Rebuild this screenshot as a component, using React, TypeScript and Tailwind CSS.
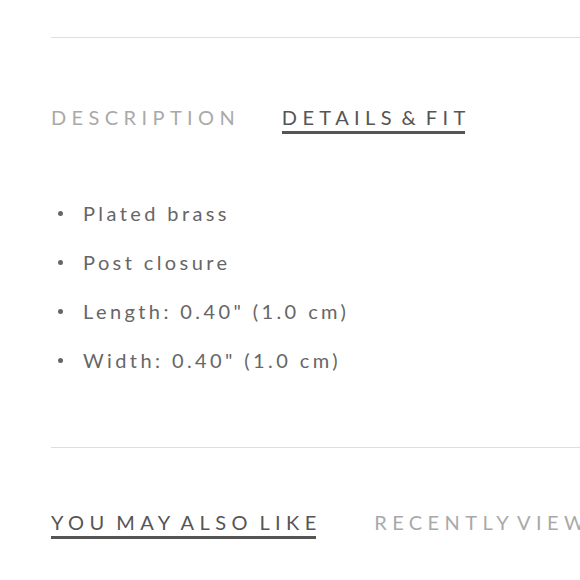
import React from 'react';

const details = ['Plated brass', 'Post closure', 'Length: 0.40" (1.0 cm)', 'Width: 0.40" (1.0 cm)'];

const Tab = ({ label, active, className = '' }: { label: string; active?: boolean; className?: string }) => (
  <button
    className={
      'shrink-0 whitespace-nowrap pb-[2px] text-[20px] leading-[24px] tracking-[0.27em] uppercase ' +
      (active ? 'border-b-[3px] border-[#555555] text-[#555555]' : 'border-b-[3px] border-transparent text-[#a9a9a9]') +
      ' ' +
      className
    }
  >
    <span className="-mr-[0.27em]">{label}</span>
  </button>
);

export default function App() {
  return (
    <div className="h-[580px] w-[580px] overflow-hidden bg-white" style={{ fontFamily: 'Lato, sans-serif' }}>
      <div className="w-[900px] pl-[51px] pt-[37px]">
        <div className="border-t border-[#dedede]" />

        <div className="mt-[67px] flex">
          <Tab label="Description" />
          <Tab label="Details & Fit" active className="ml-[47px] [word-spacing:-6px]" />
        </div>

        <ul className="mt-[55px]">
          {details.map((d) => (
            <li key={d} className="flex items-center text-[20px] leading-[49px] tracking-[0.17em] text-[#666666]">
              <span className="ml-[7px] mr-[20px] h-[5px] w-[5px] rounded-full bg-[#666666]" />
              {d}
            </li>
          ))}
        </ul>

        <div className="mt-[62px] border-t border-[#dedede]" />

        <div className="mt-[62px] flex">
          <Tab label="You may also like" active className="[word-spacing:-4px]" />
          <Tab label="Recently viewed" className="ml-[58px] [word-spacing:-6px]" />
        </div>
      </div>
    </div>
  );
}
